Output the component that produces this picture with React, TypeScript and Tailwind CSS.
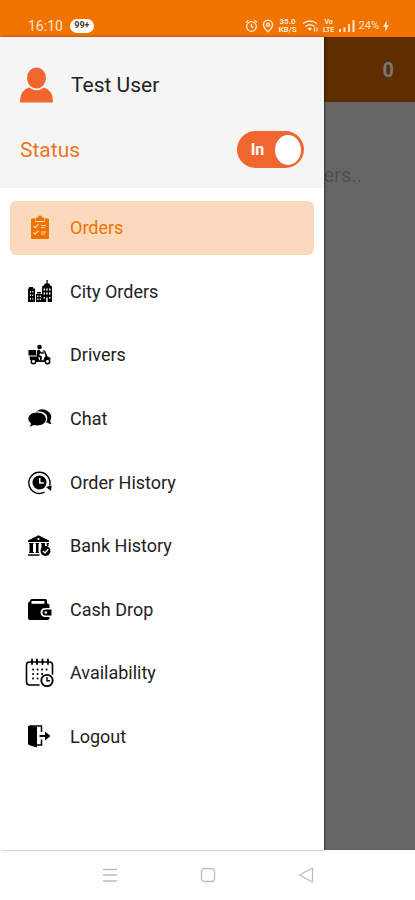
import React, { useState } from "react";

type MenuItem = {
  id: string;
  label: string;
  icon: React.ReactNode;
};

const OrdersIcon = () => (
  <svg width="30" height="30" viewBox="0 0 30 30" fill="currentColor">
    <path d="M7 5.500h3.500V9h9V5.500H23q1 0 1 1V25q0 1-1 1H7q-1 0-1-1V6.500q0-1 1-1z" />
    <path d="M11 4.500h2a2 2 0 0 1 4 0h2V8h-8z" />
    <g fill="none" stroke="#fad9bd" strokeWidth="1.200">
      <path d="M8.500 13l1.700 1.700 3.300-3.500M8.500 19.500l1.700 1.700 3.300-3.500" />
      <path d="M16 12.500h5M16 14.500h4M16 19h5M16 21h4" />
    </g>
  </svg>
);

const CityIcon = () => (
  <svg width="30" height="30" viewBox="0 0 30 30" fill="currentColor">
    <path d="M3 11.500h1V10h4v1.500h2V25H3z" />
    <path d="M11 17h6v8h-6zM12 15h4v1.500h-4z" />
    <path d="M17 9.500l2.500-1.500V6.500h2V3h1.200v3.500h2V8L27 9.500V25H17z" />
    <g fill="#fff">
      <path d="M5 14h1v1.500H5zM7.300 14h1v1.500h-1zM5 17.500h1V19H5zM7.300 17.500h1V19h-1zM5 21h1v1.500H5zM7.300 21h1v1.500h-1z" />
      <path d="M12.300 18.500h1.200V20h-1.200zM14.700 18.500h1.200V20h-1.200zM12.300 21.500h1.200V23h-1.200zM14.700 21.500h1.200V23h-1.200z" />
      <path d="M18.500 11.500h1.500v2h-1.500zM21.200 11.500h1.500v2h-1.500zM24 11.500h1.500v2H24zM18.500 15.500h1.500v2h-1.500zM21.200 15.500h1.500v2h-1.500zM24 15.500h1.500v2H24zM18.500 20h1.500v1.500h-1.500zM24 20h1.500v1.500H24zM21.200 20.500h1.500V25h-1.500z" />
    </g>
  </svg>
);

const DriversIcon = () => (
  <svg width="30" height="30" viewBox="0 0 30 30" fill="currentColor">
    <circle cx="14.500" cy="7" r="2.300" />
    <path d="M3.500 10h7.500v5.500H3.500zM12 10.500l2-1 2 2.500 3 .5v1.200l-4-.2-.8 1.500 2.800 1.500-.5 4h-1.500v-3l-3.500-1z" />
    <path d="M4.500 16.500h8.500l1.500 3.700h4q.5-3 2-4.200L19 11.500h-1.500v-1h2.500l2.500 6q3 .5 3.500 3l-2-.8q-3 0-3.500 3.300H10.500L5 19.800z" />
    <circle cx="8.500" cy="21.500" r="2.200" fill="#fff" stroke="currentColor" strokeWidth="1.500" />
    <circle cx="22.500" cy="21.500" r="2.200" fill="#fff" stroke="currentColor" strokeWidth="1.500" />
  </svg>
);

const ChatIcon = () => (
  <svg width="30" height="30" viewBox="0 0 30 30" fill="currentColor">
    <path d="M11 7.500Q17 3.500 22.500 7q6 4 2.700 9.500.3 2 1.300 3.500-2.500 0-4-1.500l-1.500.5Q25 10 16.500 7.700 13.500 7 11 7.500z" />
    <path d="M12 8.500c5 0 9 2.800 9 6.500s-4 6.500-9 6.500q-2 0-3.300-.4Q7 22.500 4.500 22.700 6 21.300 6 19.500q-2.700-2-2.700-4.500c0-3.700 3.900-6.500 8.700-6.500z" />
  </svg>
);

const HistoryIcon = () => (
  <svg width="30" height="30" viewBox="0 0 30 30" fill="currentColor">
    <circle cx="14.500" cy="14.500" r="7" />
    <path d="M14.800 10v5h4" fill="none" stroke="#fff" strokeWidth="1.400" />
    <path
      d="M19.500 24.200A10.600 10.600 0 1 1 24.700 17.500"
      fill="none"
      stroke="currentColor"
      strokeWidth="1.400"
    />
    <path d="M21 19l5.700-1.500-.7 5.500z" />
  </svg>
);

const BankIcon = () => (
  <svg width="30" height="30" viewBox="0 0 30 30" fill="currentColor">
    <path d="M3 9.500L13.500 4.200 24 9.500V11H3z" />
    <circle cx="13.500" cy="8" r="1.100" fill="#fff" />
    <path d="M4 12h4.500v1H8v8h1v1H4v-1h.5v-8H4zM10.500 12H14v1h-.5v8h.5v1h-3.500v-1h.5v-8h-.5zM16 12h4v3.500l-3.500 2V13H16zM21.500 12H24v1h-.5v2h-1.500z" />
    <path d="M3 23.300h11.500v1.500H3z" />
    <circle cx="20.500" cy="20" r="5" />
    <path d="M18 20l2 2 3.200-3.800" fill="none" stroke="#fff" strokeWidth="1.400" />
  </svg>
);

const CashIcon = () => (
  <svg width="30" height="30" viewBox="0 0 30 30" fill="currentColor">
    <path d="M5 6q0-2 2-2h13.500q1.500 0 1.500 2v2.500q2.500 0 2.500 2v2.500H20a4.300 4.300 0 0 0 0 9h4.500v1q0 2-2 2H5q-2 0-2-2V8z" />
    <path d="M6.500 6h13v2.800h-13z" fill="#fff" />
    <path d="M26.500 14.500V20.500H20.500a3 3 0 0 1 0-6z" />
    <circle cx="20.800" cy="17.500" r="1.300" fill="#fff" />
  </svg>
);

const AvailabilityIcon = () => (
  <svg
    width="30"
    height="30"
    viewBox="0 0 30 30"
    fill="none"
    stroke="currentColor"
    strokeWidth="1.600"
    strokeLinecap="round"
  >
    <path d="M14 27H4.500Q1.500 27 1.500 24V7q0-3 3-3h20q3 0 3 3v9" />
    <path d="M7 1.500v4.500M12 1.500v4.500M17.500 1.500v4.500M23 1.500v4.500" strokeWidth="1.800" />
    <path
      d="M8 11.500h.2M12.500 11.500h.2M17 11.500h.2M21.500 11.500h.2M8 16h.2M12.500 16h.2M17 16h.2M8 20.500h.2M12.500 20.500h.2"
      strokeWidth="1.800"
    />
    <circle cx="22" cy="22.500" r="5.700" strokeWidth="1.800" />
    <path d="M22 19.500v3.200h2.500" strokeWidth="1.400" />
  </svg>
);

const LogoutIcon = () => (
  <svg width="30" height="30" viewBox="0 0 30 30" fill="currentColor">
    <path d="M4.500 3.500L12 5v20.500l-7.500-2.300q-1.500-.5-1.500-2V5q0-1.500 1.500-1.500z" />
    <path
      d="M5 4h11.500v6M16.500 17.500v5.500H11"
      fill="none"
      stroke="currentColor"
      strokeWidth="1.500"
    />
    <path d="M14.500 13H20V9.500l5.500 4.500-5.500 4.500V15h-5.500z" />
  </svg>
);

const menu: MenuItem[] = [
  { id: "orders", label: "Orders", icon: <OrdersIcon /> },
  { id: "city", label: "City Orders", icon: <CityIcon /> },
  { id: "drivers", label: "Drivers", icon: <DriversIcon /> },
  { id: "chat", label: "Chat", icon: <ChatIcon /> },
  { id: "history", label: "Order History", icon: <HistoryIcon /> },
  { id: "bank", label: "Bank History", icon: <BankIcon /> },
  { id: "cash", label: "Cash Drop", icon: <CashIcon /> },
  { id: "availability", label: "Availability", icon: <AvailabilityIcon /> },
  { id: "logout", label: "Logout", icon: <LogoutIcon /> },
];

const StatusBar = () => (
  <div className="flex h-[37px] items-end justify-between bg-[#f07300] pr-[26px] pb-[3px] pl-7 text-[#ffe6cf]">
    <div className="flex h-4 items-center gap-[7px]">
      <span className="text-sm leading-4">16:10</span>
      <span className="flex h-[14px] w-6 items-center justify-center rounded-full bg-white text-[9px] font-bold text-[#4a3a2c]">
        99+
      </span>
    </div>
    <div className="flex h-4 items-center gap-1">
      <svg width="13" height="14" viewBox="0 0 13 14" fill="none" stroke="currentColor" strokeWidth="1.300">
        <circle cx="6.500" cy="7.500" r="4.800" />
        <path d="M1 3.500L3.500 1.300M12 3.500L9.500 1.300M6.500 5v3l2 .5" />
      </svg>
      <svg width="12" height="14" viewBox="0 0 12 14" fill="none" stroke="currentColor" strokeWidth="1.400">
        <path d="M6 12.800Q1.500 8.500 1.500 5.700a4.500 4.500 0 0 1 9 0Q10.500 8.500 6 12.800z" />
        <circle cx="6" cy="5.700" r="1.500" />
      </svg>
      <span className="flex w-5 flex-col text-center text-[8px] font-bold">
        <span className="leading-2">35.0</span>
        <span className="leading-2">KB/S</span>
      </span>
      <svg width="17" height="14" viewBox="0 0 17 14" fill="none" stroke="currentColor" strokeWidth="1.500">
        <path d="M1 4.500Q8 -.5 15 4.500M3.500 7.300Q8 4 12.500 7.300" />
        <path d="M5.500 9.300Q8 7.500 10 9.300L8 12z" fill="currentColor" stroke="none" />
        <path d="M12.500 12.500V8.500M15 8.500v4" strokeWidth="1.200" />
      </svg>
      <span className="flex w-3 flex-col text-center text-[7px] font-bold">
        <span className="leading-2">Vo</span>
        <span className="leading-2">LTE</span>
      </span>
      <svg width="16" height="14" viewBox="0 0 16 14" fill="currentColor">
        <path d="M0 10h2v3H0zM4.500 8.500h2V13h-2zM9 5h2v8H9zM13.500 1h2v12h-2z" />
      </svg>
      <div className="flex items-center gap-1">
        <span className="text-[11px] leading-4">24%</span>
        <svg width="6" height="12" viewBox="0 0 6 12" fill="currentColor">
          <path d="M4 0L0 7h2.500L2 12l4-7H3.500z" />
        </svg>
      </div>
    </div>
  </div>
);

const SystemNav = () => (
  <div className="flex h-[50px] items-center justify-center gap-[82px] bg-white text-[#bdbdbd]">
    <button aria-label="Recent apps">
      <svg width="16" height="16" viewBox="0 0 16 16" fill="none" stroke="currentColor" strokeWidth="1.300">
        <path d="M1 2.500h14M1 8h14M1 14h14" />
      </svg>
    </button>
    <button aria-label="Home">
      <svg width="16" height="16" viewBox="0 0 16 16" fill="none" stroke="currentColor" strokeWidth="1.300">
        <rect x="1.500" y="1.500" width="13" height="13" rx="3" />
      </svg>
    </button>
    <button aria-label="Back">
      <svg
        width="16"
        height="16"
        viewBox="0 0 16 16"
        fill="none"
        stroke="currentColor"
        strokeWidth="1.300"
        strokeLinejoin="round"
      >
        <path d="M14.500 1v14L1.500 8z" />
      </svg>
    </button>
  </div>
);

const App: React.FC = () => {
  const [active, setActive] = useState("orders");
  const [isIn, setIsIn] = useState(true);

  return (
    <div className="flex min-h-screen flex-col bg-white font-[Roboto,sans-serif]">
      <StatusBar />

      <div className="flex flex-1">
        {/* Drawer */}
        <aside className="z-10 flex w-[78%] shrink-0 flex-col bg-white shadow-[1px_0_2px_rgba(0,0,0,0.5)]">
          <div className="flex flex-col gap-[27px] bg-[#f5f5f5] pt-[29px] pr-5 pb-5 pl-5">
            <div className="flex items-center gap-[18px]">
              <svg width="33" height="38" viewBox="0 0 33 38" fill="#f1652f">
                <ellipse cx="16.500" cy="12" rx="9.500" ry="10.500" />
                <path d="M0 36.500Q0 24 9 21.500q7.500 5.500 15 0Q33 24 33 36.500z" />
              </svg>
              <span className="text-[21px] leading-7 text-[#222]">Test User</span>
            </div>

            <div className="flex items-center justify-between">
              <span id="status-label" className="text-[21px] leading-7 text-[#ee7420]">
                Status
              </span>
              <button
                role="switch"
                aria-checked={isIn}
                aria-labelledby="status-label"
                onClick={() => setIsIn(!isIn)}
                className="flex h-[37px] w-[67px] items-center justify-between rounded-full bg-[#f1652f] pr-[3px] pl-[14px] text-base font-bold text-white"
              >
                {isIn ? "In" : "Out"}
                <span className="h-[30px] w-[26px] rounded-[50%] bg-white" />
              </button>
            </div>
          </div>

          <nav className="flex flex-1 flex-col pt-[13px] pr-[10px] pb-[86px] pl-[10px]">
            <ul className="flex flex-1 flex-col justify-between gap-1">
              {menu.map((item) => (
                <li key={item.id}>
                  <button
                    onClick={() => setActive(item.id)}
                    className={`flex h-[54px] w-full items-center gap-[15px] rounded-md px-[15px] text-lg ${
                      active === item.id ? "bg-[#fad9bd] text-[#f07300]" : "text-black"
                    }`}
                  >
                    {item.icon}
                    <span className={active === item.id ? "" : "text-[#222]"}>{item.label}</span>
                  </button>
                </li>
              ))}
            </ul>
          </nav>
        </aside>

        {/* Dimmed page behind the drawer */}
        <main className="flex-1 overflow-hidden bg-[#666]">
          <div className="flex h-[65px] items-center justify-end bg-[#602d00] pr-[21px] text-xl font-bold text-[#777]">
            0
          </div>
          <p className="pt-[57px] text-xl leading-8 text-[#505050]">ers..</p>
        </main>
      </div>

      <SystemNav />
    </div>
  );
};

export default App;
